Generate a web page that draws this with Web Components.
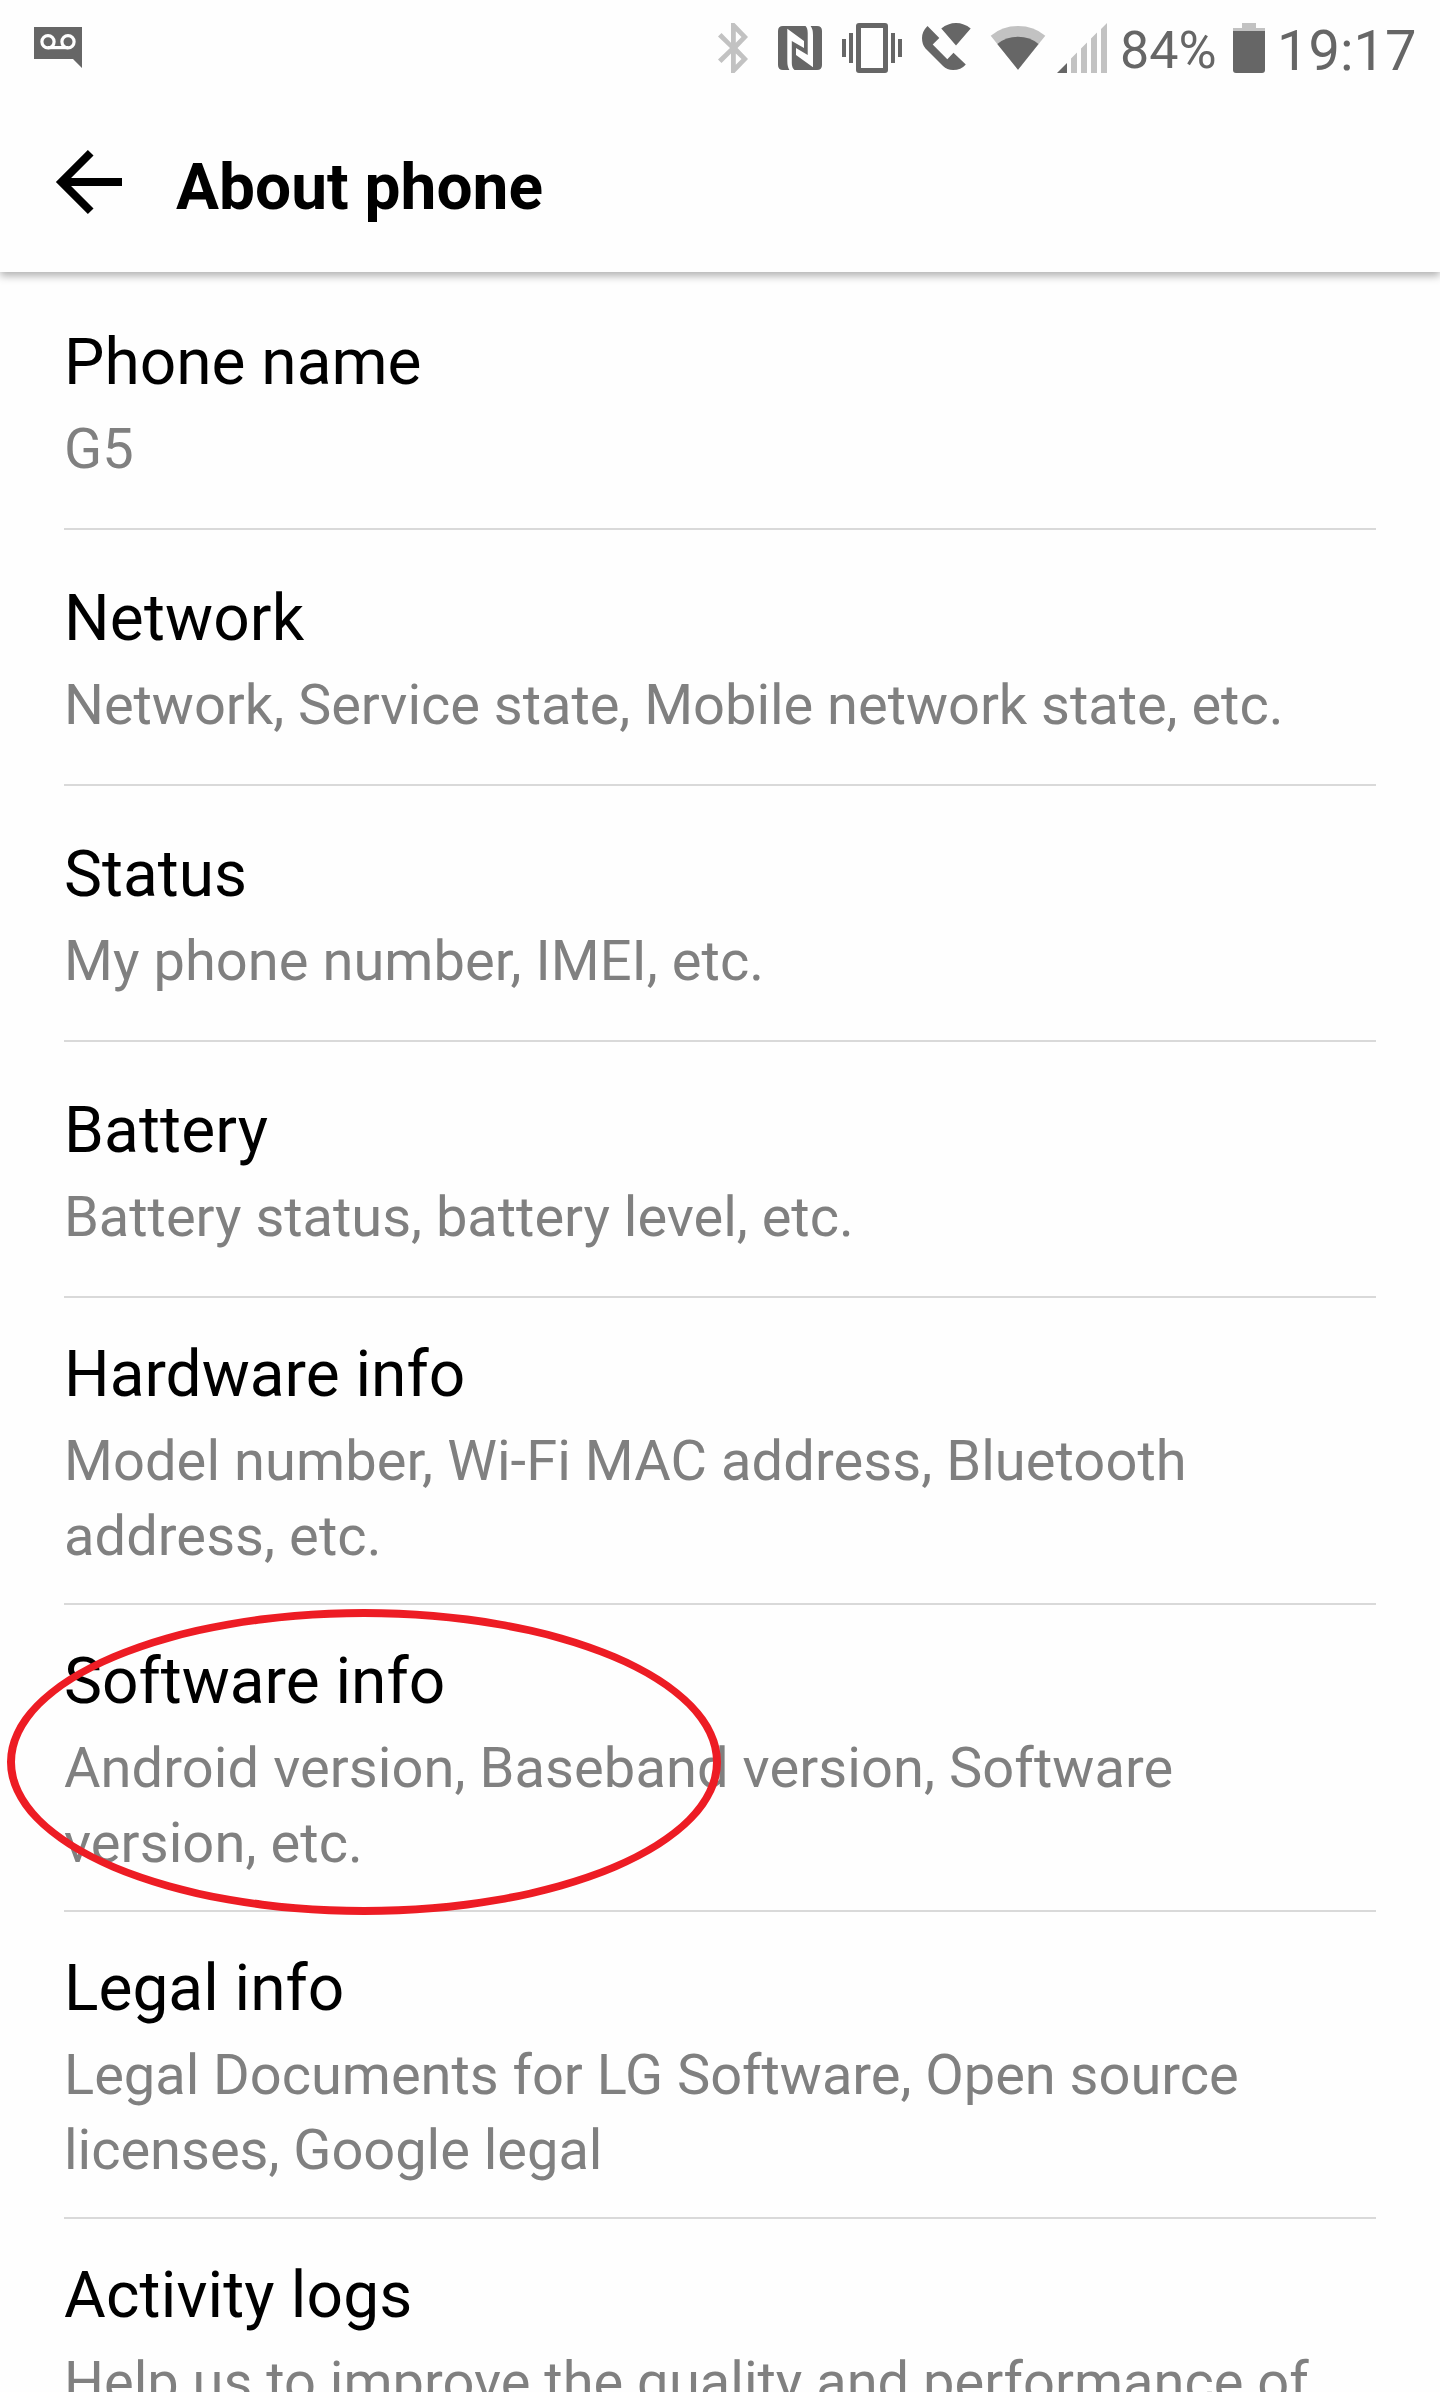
<!DOCTYPE html>
<html lang="en">
<head>
<meta charset="utf-8">
<title>About phone</title>
<style>
html, body { margin: 0; background: #fefefe; }
body { font-family: Roboto, "Liberation Sans", sans-serif; height: 2392px; overflow: hidden; }
</style>
</head>
<body>
<about-screen></about-screen>
<script>
const define = (name, html, setup) => {
  const template = document.createElement('template');
  template.innerHTML = html;
  customElements.define(name, class extends HTMLElement {
    constructor() {
      super();
      this.attachShadow({ mode: 'open' }).append(template.content.cloneNode(true));
    }
    connectedCallback() { if (setup) setup(this, this.shadowRoot); }
  });
};

/* Each glyph: horizontal start, width, markup. All share the bar's vertical axis. */
const GLYPHS = {
  voicemail: [34, 48, '<path d="M34 27H82V68L73 59H34Z"/><g fill="none" stroke="#fefefe" stroke-width="3.2"><circle cx="48" cy="41.8" r="6.1"/><circle cx="68" cy="41.8" r="6.1"/><path d="M48 47.6H68"/></g>'],
  bluetooth: [717, 32, '<path fill="#c2c2c2" fill-rule="evenodd" d="M748 37L734.5 23H731V42.7L721.5 33L718 36.5L730 48L718 59.5L721.5 63L731 53.5V73H734.5L748 59L737.5 48ZM735.8 31.3L741.5 37L735.8 42.7ZM735.8 53.4L741.5 59L735.8 64.8Z"/>'],
  nfc: [778, 44, '<path d="M783 26H805.5Q807.7 28 807.7 33V55L796 48V55L813 67.3V35Q813 29 810.6 26H817Q822 26 822 31V65Q822 70 817 70H794.5Q791.8 68 791.8 63V41L804 48V41L787.3 28.7V61Q787.3 67 789.4 70H783Q778 70 778 65V31Q778 26 783 26Z"/>'],
  vibrate: [842, 60, '<path fill-rule="evenodd" d="M859 23H885Q888 23 888 26V70Q888 73 885 73H859Q856 73 856 70V26Q856 23 859 23ZM861 28V68H883V28ZM849 33H853V63H849ZM842 39H846V57H842ZM891 33H895V63H891ZM898 39H902V57H898Z"/>'],
  call: [922, 49, '<path d="M927.5 26L939.3 38L932.7 44.6L947.3 59.2L953.5 52.8L965.8 64.4Q961 70 953 70Q947 70 943 66L925.5 48.5Q922 44.5 922 38Q922 31.500 927.5 26ZM941.3 28.5Q948 23 956 23Q964 23 970.700 28.5L956 45.4Z"/>'],
  wifi: [990, 56, '<path fill="#c2c2c2" d="M990.7 35.7Q1002 26 1018 26Q1034 26 1045.300 35.7L1018 69.700Z"/><path d="M997.3 44Q1006 36.800 1018 36.800Q1030 36.800 1038.500 44L1018 69.700Z"/>'],
  signal: [1057, 50, '<path d="M1057 73L1067 63V73Z"/><path fill="#c2c2c2" d="M1071 73V58.500L1077 52.500V73ZM1081 73V48.500L1087 42.500V73ZM1091 73V38.500L1097 32.500V73ZM1101 73V29L1107 23V73Z"/>'],
  battery: [1233, 32, '<path fill="#c2c2c2" d="M1242 23H1256V28H1265V31H1233V28H1242Z"/><path d="M1233 31H1265V70Q1265 73 1262 73H1236Q1233 73 1233 70Z"/>']
};

define('status-icon', `
<style>
:host { display: block; flex: none; height: 96px; }
svg { display: block; height: 96px; fill: #666; }
</style>
<svg></svg>`, (el, root) => {
  const [x, w, markup] = GLYPHS[el.getAttribute('name')];
  const svg = root.querySelector('svg');
  svg.setAttribute('viewBox', `${x} 0 ${w} 96`);
  svg.setAttribute('width', w);
  svg.innerHTML = markup;
});

define('status-bar', `
<style>
:host { display: flex; height: 96px; padding-left: 34px; box-sizing: border-box; color: #666; white-space: nowrap; }
.system { display: flex; margin-left: 635px; }
.nfc { margin-left: 29px; }
.m20 { margin-left: 20px; }
.m19 { margin-left: 19px; }
.m11 { margin-left: 11px; }
.level { width: 113px; margin-left: 13px; font-size: 52px; line-height: 101px; }
.clock { margin-left: 12px; font-size: 56px; line-height: 102px; }
</style>
<status-icon name="voicemail"></status-icon>
<div class="system">
<status-icon name="bluetooth"></status-icon>
<status-icon class="nfc" name="nfc"></status-icon>
<status-icon class="m20" name="vibrate"></status-icon>
<status-icon class="m20" name="call"></status-icon>
<status-icon class="m19" name="wifi"></status-icon>
<status-icon class="m11" name="signal"></status-icon>
<span class="level">84%</span>
<status-icon name="battery"></status-icon>
<span class="clock">19:17</span>
</div>`);

define('title-bar', `
<style>
:host { display: flex; height: 176px; padding-left: 55px; box-sizing: border-box; color: #000; }
svg { display: block; margin-top: 48px; }
h1 { margin: 54px 0 0 53px; font-size: 64px; line-height: 75px; font-weight: 700; white-space: nowrap; }
</style>
<svg width="68" height="76" viewBox="55 144 68 76" fill="none" stroke="#000" stroke-width="8"><path d="M122 182H62"/><path d="M90.700 152.700L61.500 182L90.700 211.300"/></svg>
<h1><slot></slot></h1>`);

define('info-row', `
<style>
:host { display: block; box-sizing: border-box; height: 256px; margin: 0 64px; padding-top: 51px; border-bottom: 2px solid #d9d9d9; }
:host([lines="2"]) { height: 307px; padding-top: 39px; }
h2 { margin: 0; font-size: 64px; line-height: 75px; font-weight: 400; color: #000; white-space: nowrap; letter-spacing: var(--heading-tracking, normal); }
p { margin: 12px 0 0; padding-right: 40px; font-size: 56px; line-height: 75px; color: #808080; letter-spacing: var(--detail-tracking, normal); }
</style>
<h2></h2>
<p><slot></slot></p>`, (el, root) => {
  root.querySelector('h2').textContent = el.getAttribute('heading');
});

define('highlight-ring', `
<style>
:host { position: absolute; left: 7px; top: 1609px; width: 714px; height: 306px; box-sizing: border-box; border: 8px solid #ed1c24; border-radius: 50%; }
</style>`);

define('about-screen', `
<style>
:host { display: block; position: relative; width: 1440px; height: 2392px; overflow: hidden; background: #fefefe; }
header { height: 272px; box-shadow: 0 4px 8px rgba(0,0,0,.3); }
main { padding-top: 2px; }
.network { --heading-tracking: .15px; --detail-tracking: -.03px; }
.status { --detail-tracking: .05px; }
.battery { --heading-tracking: .15px; --detail-tracking: -.02px; }
.hardware { --detail-tracking: .07px; }
.software { --detail-tracking: .08px; }
.legal { --detail-tracking: -.03px; }
.logs { --heading-tracking: .16px; }
</style>
<header>
<status-bar></status-bar>
<title-bar>About phone</title-bar>
</header>
<main>
<info-row heading="Phone name">G5</info-row>
<info-row class="network" heading="Network">Network, Service state, Mobile network state, etc.</info-row>
<info-row class="status" heading="Status">My phone number, IMEI, etc.</info-row>
<info-row class="battery" heading="Battery">Battery status, battery level, etc.</info-row>
<info-row class="hardware" lines="2" heading="Hardware info">Model number, Wi-Fi MAC address, Bluetooth address, etc.</info-row>
<info-row class="software" lines="2" heading="Software info">Android version, Baseband version, Software version, etc.</info-row>
<info-row class="legal" lines="2" heading="Legal info">Legal Documents for LG Software, Open source licenses, Google legal</info-row>
<info-row class="logs" lines="2" heading="Activity logs">Help us to improve the quality and performance of</info-row>
</main>
<highlight-ring></highlight-ring>`);
</script>
</body>
</html>
